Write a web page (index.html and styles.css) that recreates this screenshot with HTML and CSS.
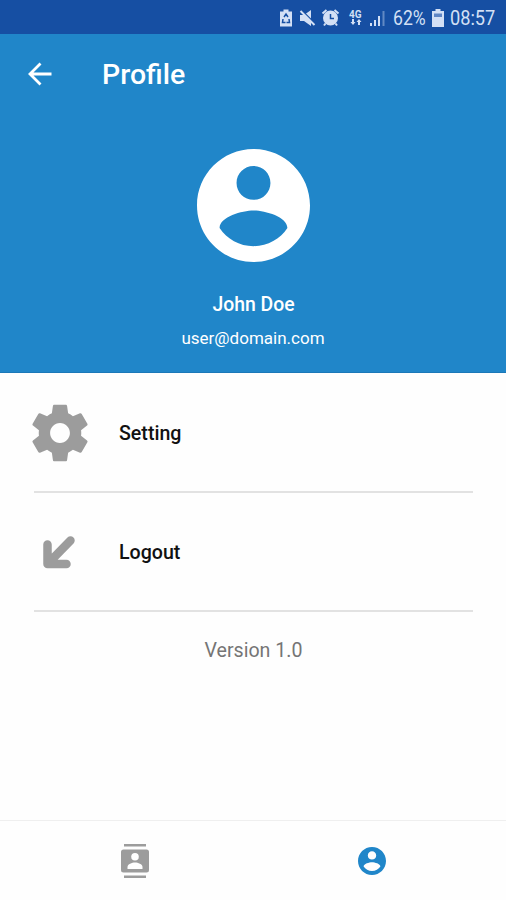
FILE: index.html
```html
<!DOCTYPE html>
<html lang="en">
<head>
  <meta charset="UTF-8" />
  <meta name="viewport" content="width=device-width, initial-scale=1.0" />
  <title>Profile</title>
  <link rel="stylesheet" href="styles.css">
</head>
<body>
  <!-- System status bar -->
  <div class="status-bar">
    <svg class="status-icons" width="110" height="20" viewBox="0 0 110 20">
      <!-- battery saver -->
      <path d="M4.500 1.500h5v2H13v15H1v-15h3.500z" />
      <path class="cut" d="M5 9l2-3 2 3M4 11l-.5 3.500h3M10 11l.5 3.500h-3" />
      <!-- muted -->
      <path d="M21 7h4l7-5v16l-7-5h-4z" />
      <path class="cut" d="M23 2.500l13 13" />
      <path class="line" d="M21.500 3l14 14" />
      <!-- alarm -->
      <circle cx="51.500" cy="10" r="7.500" />
      <path class="line" d="M43.500 5.500l4-3.500M59.500 5.500l-4-3.500M46.500 15.500l-1.500 2M56.500 15.500l1.500 2" />
      <path class="cut" d="M51.500 6v4.500h3.500" />
      <!-- 4G data -->
      <text x="70" y="9.500">4G</text>
      <path d="M73 11h2v3h1.500L74 17l-2.500-3H73zM79 17v-3h-1.500l2.500-3 2.500 3H81v3z" />
      <!-- signal -->
      <path d="M91 15h2v3h-2zM95 12h2v6h-2zM99 8h2v10h-2z" />
      <path class="faint" d="M103.500 3h2v15h-2z" />
    </svg>
    <span class="percent">62%</span>
    <svg class="battery" width="12" height="18" viewBox="0 0 12 18">
      <path d="M3.500 0h5v2H12v16H0V2h3.500z" />
      <path class="level" d="M2 4.500h8v3.500H2z" />
    </svg>
    <span class="clock">08:57</span>
  </div>

  <!-- Profile header -->
  <header class="header">
    <div class="toolbar">
      <svg class="back" width="24" height="24" viewBox="0 0 24 24">
        <path d="M23.500 12H2M12.500 1.500L2 12l10.500 10.500" />
      </svg>
      <h1>Profile</h1>
    </div>
    <svg class="avatar" viewBox="2 2 20 20">
      <path d="M12 2C6.480 2 2 6.480 2 12s4.480 10 10 10 10-4.480 10-10S17.520 2 12 2zm0 3c1.660 0 3 1.340 3 3s-1.340 3-3 3-3-1.340-3-3 1.340-3 3-3zm0 14.200c-2.500 0-4.710-1.280-6-3.220.03-1.990 4-3.080 6-3.080 1.990 0 5.970 1.090 6 3.080-1.290 1.940-3.500 3.220-6 3.220z" />
    </svg>
    <div class="name">John Doe</div>
    <div class="email">user@domain.com</div>
  </header>

  <!-- Menu -->
  <main class="menu">
    <div class="menu-item">
      <div class="menu-icon">
        <svg width="68" height="68" viewBox="0 0 24 24">
          <path d="M19.430 12.980c.04-.32.070-.64.070-.98s-.03-.66-.07-.98l2.110-1.650c.19-.15.240-.42.120-.64l-2-3.460c-.12-.22-.39-.3-.61-.22l-2.490 1c-.52-.4-1.080-.73-1.690-.98l-.38-2.650C14.460 2.180 14.250 2 14 2h-4c-.25 0-.46.180-.49.420l-.38 2.650c-.61.250-1.170.590-1.690.980l-2.490-1c-.23-.09-.49 0-.61.220l-2 3.460c-.13.220-.07.490.120.640l2.110 1.650c-.04.320-.07.650-.07.980s.03.660.07.980l-2.110 1.650c-.19.150-.24.420-.12.640l2 3.460c.12.220.39.300.61.220l2.490-1c.52.400 1.080.730 1.690.980l.38 2.650c.03.240.24.420.49.420h4c.25 0 .46-.18.490-.42l.38-2.650c.61-.25 1.170-.59 1.690-.98l2.490 1c.23.090.49 0 .61-.22l2-3.460c.12-.22.07-.49-.12-.64l-2.110-1.650zM12 15.500c-1.930 0-3.500-1.570-3.500-3.500s1.570-3.500 3.500-3.500 3.500 1.570 3.500 3.500-1.570 3.500-3.500 3.500z" />
        </svg>
      </div>
      <span>Setting</span>
    </div>
    <div class="menu-item">
      <div class="menu-icon">
        <svg class="logout" width="34" height="34" viewBox="0 0 34 34">
          <path d="M4.500 9.500v19.500H23.500M27.500 5.500L5.500 28" />
        </svg>
      </div>
      <span>Logout</span>
    </div>
    <p class="version">Version 1.0</p>
  </main>

  <!-- Bottom navigation -->
  <nav class="tabs">
    <div class="tab">
      <svg width="30" height="34" viewBox="0 0 30 34">
        <path d="M4 0h22v2.500H4zM4 31.500h22V34H4zM3.500 5.500h23a2.500 2.500 0 0 1 2.500 2.500v18a2.500 2.500 0 0 1-2.500 2.500h-23A2.500 2.500 0 0 1 1 26V8a2.500 2.500 0 0 1 2.500-2.500z" />
        <circle class="hole" cx="15" cy="12.800" r="3.800" />
        <path class="hole" d="M7.500 25v-2c0-3 4.500-4.500 7.500-4.500s7.500 1.500 7.500 4.500v2z" />
      </svg>
    </div>
    <div class="tab active">
      <svg width="28" height="28" viewBox="2 2 20 20">
        <path d="M12 2C6.480 2 2 6.480 2 12s4.480 10 10 10 10-4.480 10-10S17.520 2 12 2zm0 3c1.660 0 3 1.340 3 3s-1.340 3-3 3-3-1.340-3-3 1.340-3 3-3zm0 14.200c-2.500 0-4.710-1.280-6-3.220.03-1.990 4-3.080 6-3.080 1.990 0 5.970 1.090 6 3.080-1.290 1.940-3.500 3.220-6 3.220z" />
      </svg>
    </div>
  </nav>
</body>
</html>
```

FILE: styles.css
```css
/* Page shell */
* {
  box-sizing: border-box;
}
body {
  margin: 0;
  height: 900px;
  display: flex;
  flex-direction: column;
  font-family: Roboto, "Liberation Sans", sans-serif;
  background: #fefefe;
  overflow: hidden;
}
svg {
  display: block;
  flex: none;
}

/* Status bar */
.status-bar {
  height: 34px;
  display: flex;
  align-items: center;
  justify-content: flex-end;
  padding: 2px 10px 0 0;
  background: #164fa3;
  color: #d3e0f5;
  font-size: 20px;
}
.status-icons {
  fill: #d3e0f5;
  margin-right: 4px;
}
.status-icons text {
  font-size: 10px;
  font-weight: 700;
}
.status-icons .line {
  fill: none;
  stroke: #d3e0f5;
  stroke-width: 2;
}
.status-icons .cut {
  fill: none;
  stroke: #164fa3;
  stroke-width: 1.5;
}
.status-icons .faint {
  opacity: 0.4;
}
.percent {
  width: 34px;
  transform: scaleX(0.88);
  transform-origin: left;
}
.battery {
  fill: #d3e0f5;
  margin: 0 6px 0 5px;
}
.battery .level {
  fill: #5f86c4;
}
.clock {
  width: 46px;
  transform: scaleX(0.91);
  transform-origin: left;
}

/* Header */
.header {
  height: 339px;
  display: flex;
  flex-direction: column;
  align-items: center;
  background: #2086c9;
  border-bottom: 1px solid #1b78b8;
  color: #fff;
}
.toolbar {
  width: 100%;
  height: 80px;
  display: flex;
  align-items: center;
  padding-left: 28px;
}
.back {
  fill: none;
  stroke: #fff;
  stroke-width: 2.8;
}
h1 {
  margin: 1px 0 0 50px;
  font-size: 28.5px;
  font-weight: 500;
  line-height: 32px;
}
.avatar {
  width: 113px;
  height: 113px;
  margin-top: 35px;
  fill: #fff;
}
.name {
  margin: 31px 0 0 1px;
  font-size: 19.4px;
  font-weight: 500;
  line-height: 24px;
}
.email {
  margin-top: 11px;
  font-size: 17px;
  line-height: 20px;
}

/* Menu */
.menu {
  flex: 1;
  padding: 1px 33px 0 34px;
}
.menu-item {
  height: 119px;
  display: flex;
  align-items: center;
  border-bottom: 2px solid #e2e2e2;
  font-size: 19.6px;
  font-weight: 500;
  color: #111;
}
.menu-icon {
  width: 51px;
  margin-right: 34px;
  display: flex;
  justify-content: center;
  fill: #9c9c9c;
}
.menu-item span {
  padding-top: 2px;
}
.logout path {
  fill: none;
  stroke: #9c9c9c;
  stroke-width: 8.5;
  stroke-linecap: round;
  stroke-linejoin: round;
}
.version {
  margin: 27px 0 0;
  text-align: center;
  font-size: 19.6px;
  line-height: 24px;
  color: #757575;
}

/* Bottom tabs */
.tabs {
  height: 80px;
  display: flex;
  border-top: 1px solid #efefef;
}
.tab {
  width: 237px;
  display: flex;
  align-items: center;
  justify-content: center;
  fill: #9c9c9c;
}
.tab:first-child {
  padding-left: 33px;
}
.tab.active {
  fill: #2086c9;
  padding-left: 33px;
}
.tab .hole {
  fill: #fefefe;
}
```
